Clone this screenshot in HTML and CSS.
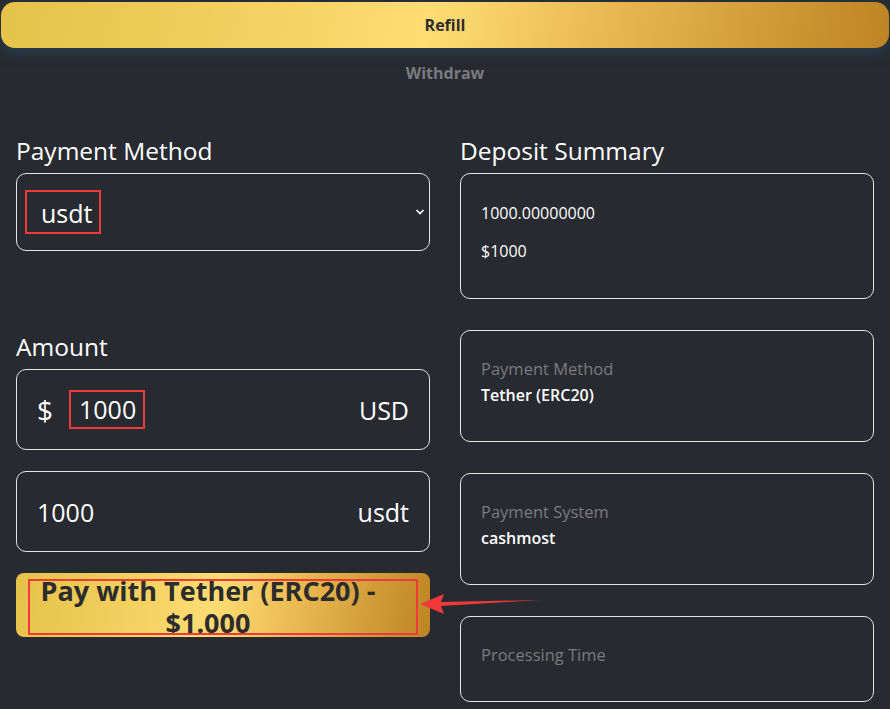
FILE: index.html
```html
<!DOCTYPE html>
<html lang="en">
<head>
  <meta charset="UTF-8">
  <meta name="viewport" content="width=device-width, initial-scale=1.0">
  <title>Refill</title>
  <link rel="stylesheet" href="styles.css">
</head>
<body>

  <div class="tabs">
    <button type="button" class="tab active">Refill</button>
    <button type="button" class="tab">Withdraw</button>
  </div>

  <div class="content">
    <div class="col">
      <h3>Payment Method</h3>
      <div class="field select">
        <span class="mark">usdt</span>
        <svg class="chevron" width="10" height="8" viewBox="0 0 10 8"><path d="M1.5 2 L5 5.5 L8.5 2" fill="none" stroke="#fff" stroke-width="1.6"/></svg>
      </div>

      <h3 class="amount-title">Amount</h3>
      <div class="field">
        <span class="cur">$</span>
        <span class="mark num">1000</span>
        <span class="unit">USD</span>
      </div>
      <div class="field">
        <span class="plain">1000</span>
        <span class="unit">usdt</span>
      </div>

      <button type="button" class="pay">Pay with Tether (ERC20) - $1.000</button>
    </div>

    <div class="col">
      <h3>Deposit Summary</h3>
      <div class="box summary">
        <p>1000.00000000</p>
        <p>$1000</p>
      </div>
      <div class="box">
        <div class="lbl">Payment Method</div>
        <div class="val">Tether (ERC20)</div>
      </div>
      <div class="box">
        <div class="lbl">Payment System</div>
        <div class="val">cashmost</div>
      </div>
      <div class="box last">
        <div class="lbl">Processing Time</div>
      </div>
    </div>
  </div>

  <svg class="arrow" width="130" height="30" viewBox="0 0 130 30">
    <polygon points="2,15 26,5 23,13 122,11 23,17 26,25" fill="#f03a3a"/>
  </svg>

</body>
</html>
```

FILE: styles.css
```css
body {
  margin: 0;
  background: #272a30;
  font-family: 'Open Sans', 'Noto Sans', sans-serif;
  color: #fff;
  position: relative;
}

.tabs {
  padding: 2px 1px 0;
  display: flex;
  flex-direction: column;
}

.tab {
  font-family: inherit;
  font-size: 16px;
  font-weight: 700;
  border: none;
  background: none;
  color: #7a7b7e;
  height: 46px;
  cursor: pointer;
}
.tab.active {
  color: #2c2c2c;
  border-radius: 14px;
  background: linear-gradient(100deg, #e5c24a 0%, #f7d465 35%, #ffdd74 48%, #e7b54e 70%, #bd8424 100%);
  box-shadow: 0 4px 14px rgba(38, 66, 84, 0.9);
}
.tab + .tab {
  height: 50px;
}

.content {
  display: grid;
  grid-template-columns: 414px 414px;
  gap: 30px;
  padding: 38px 16px 0;
}

h3 {
  margin: 0 0 8px;
  font-size: 24.5px;
  font-weight: 500;
  line-height: 29px;
}

.amount-title {
  margin-top: 81px;
}

.field {
  height: 79px;
  border: 1px solid #e4e4e4;
  border-radius: 10px;
  display: flex;
  align-items: center;
  padding: 0 20px;
  font-size: 25px;
  margin-bottom: 21px;
}

.select {
  height: 76px;
  padding: 0 4px 0 8px;
  justify-content: space-between;
  margin-bottom: 0;
}

.mark {
  border: 2px solid #f03a3a;
  padding: 2px 7px 0 14px;
  line-height: 38px;
}
.num {
  margin-left: 16px;
  padding: 0 7px 0 8px;
  line-height: 35px;
}

.cur {
  font-size: 28px;
}

.unit {
  margin-left: auto;
}

.pay {
  position: relative;
  width: 100%;
  height: 64px;
  border: none;
  border-radius: 8px;
  background: linear-gradient(100deg, #e5c24a 0%, #f7d465 35%, #ffdd74 48%, #e7b54e 70%, #bd8424 100%);
  padding: 2px 42px 0 12px;
  font-family: inherit;
  font-size: 27px;
  font-weight: 700;
  color: #2c2c2c;
  line-height: 32px;
  display: block;
  overflow: visible;
}
.pay::after {
  content: "";
  position: absolute;
  left: 12px;
  right: 12px;
  top: 6px;
  bottom: 2px;
  border: 2px solid #f03a3a;
}

.box {
  border: 1px solid #e4e4e4;
  border-radius: 10px;
  padding: 26px 20px 0;
  box-sizing: border-box;
  height: 112px;
  margin-bottom: 31px;
  font-size: 16px;
}
.summary {
  height: 126px;
  padding-top: 27px;
}
.summary p {
  margin: 0 0 14px;
  font-size: 16px;
  line-height: 24px;
}
.lbl {
  color: #7a7b7e;
  font-size: 16.5px;
  line-height: 24px;
}
.val {
  font-weight: 600;
  line-height: 28px;
}
.last {
  height: 86px;
  margin-bottom: 9px;
}

.arrow {
  position: absolute;
  left: 418px;
  top: 589px;
}
```
